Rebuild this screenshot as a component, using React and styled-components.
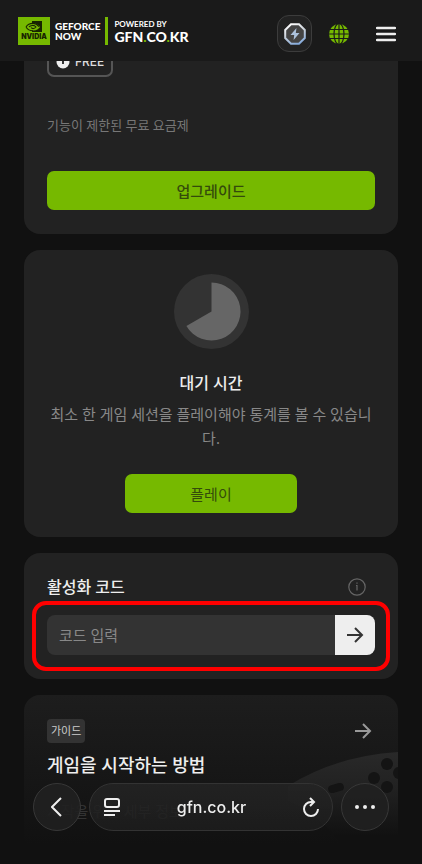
import React from "react";
import styled, { createGlobalStyle } from "styled-components";

const GlobalStyle = createGlobalStyle`
  *, *::before, *::after { box-sizing: border-box; }
  html { background: #111; }
  body {
    margin: 0;
    background: #111;
    color: #eee;
    font-family: "Noto Sans", "Noto Sans CJK KR", sans-serif;
    overflow: hidden;
  }
  button, input { font: inherit; }
  h2, p { margin: 0; }
`;

const Page = styled.div`
  height: 100vh;
  overflow: hidden;
`;

const Header = styled.header`
  position: fixed;
  inset: 0 0 auto;
  z-index: 2;
  display: flex;
  align-items: flex-start;
  justify-content: space-between;
  height: 61px;
  padding: 15px 16px 0 18px;
  background: #1a1a1a;
`;

const Brand = styled.a`
  display: flex;
  align-items: center;
  padding-top: 2px;
  color: #fff;
  text-decoration: none;
  font-family: Lato, sans-serif;
  font-weight: 900;
  white-space: nowrap;
`;

const LogoTile = styled.span`
  display: flex;
  flex-direction: column;
  align-items: center;
  justify-content: center;
  width: 32px;
  height: 28px;
  background: #76b900;
  color: #182400;
  font: 900 7px/8px Inter, sans-serif;
`;

const Product = styled.span`
  display: flex;
  flex-direction: column;
  justify-content: center;
  height: 28px;
  margin-left: 5px;
  padding-right: 5px;
  border-right: 3px solid #76b900;
  font-size: 10px;
  line-height: 10px;
`;

const Partner = styled.span`
  display: flex;
  flex-direction: column;
  margin-left: 6px;
  font-size: 14px;
  line-height: 15px;

  small {
    font-size: 8px;
    line-height: 10px;
    font-weight: 700;
  }
  i { color: #76b900; font-style: normal; }
`;

const HeaderActions = styled.div`
  display: flex;
  align-items: center;
  gap: 15px;
`;

const IconButton = styled.button`
  display: grid;
  place-items: center;
  width: ${(p) => p.$width || 24}px;
  height: ${(p) => p.$height || 24}px;
  padding: 0;
  border: ${(p) => (p.$framed ? "1px solid #3c3c3c" : "0")};
  border-radius: 12px;
  background: ${(p) => (p.$framed ? "#222" : "transparent")};
  color: ${(p) => p.$color || "#eee"};
`;

const Main = styled.main`
  display: flex;
  flex-direction: column;
  gap: 16px;
  padding: 23px 24px 0;
`;

const Card = styled.section`
  display: flex;
  flex-direction: column;
  align-items: ${(p) => (p.$centered ? "center" : "stretch")};
  padding: ${(p) => (p.$compact ? 22 : 24)}px 23px 24px;
  border-radius: 16px;
  background: #222;
`;

const PlanBadge = styled.span`
  display: flex;
  align-items: center;
  align-self: flex-start;
  gap: 5px;
  height: 30px;
  padding: 0 7px;
  border: 2px solid #555;
  border-radius: 7px;
  color: #ddd;
  font: 500 12px/16px Inter, sans-serif;
`;

const PlanNote = styled.p`
  margin: 39px 0 37px;
  color: #777;
  font-size: 13px;
  line-height: 18px;
`;

const GreenButton = styled.button`
  height: 39px;
  width: ${(p) => (p.$compact ? "172px" : "100%")};
  padding: 0;
  border: 0;
  border-radius: 7px;
  background: #76b900;
  color: #344b0b;
  font-size: 15px;
  line-height: 20px;
  font-weight: ${(p) => (p.$compact ? 400 : 500)};
`;

const CardTitle = styled.h2`
  color: #eee;
  font-size: ${(p) => (p.$large ? 18 : 16)}px;
  line-height: 24px;
  font-weight: 500;
`;

const Stats = styled.div`
  display: flex;
  flex-direction: column;
  align-items: center;
  margin: 22px 0 24px;
  text-align: center;

  p {
    margin-top: 7px;
    color: #888;
    font-size: 15px;
    line-height: 24px;
  }
`;

const CardHead = styled.div`
  display: flex;
  align-items: center;
  justify-content: space-between;
`;

const CodeForm = styled.form`
  position: relative;
  display: flex;
  height: 40px;
  margin-top: 16px;

  &::after {
    content: "";
    position: absolute;
    inset: -14px -15px -16px;
    border: 4px solid #f00;
    border-radius: 14px;
    pointer-events: none;
  }
`;

const CodeInput = styled.input`
  flex: 1;
  min-width: 0;
  padding: 0 12px;
  border: 0;
  border-radius: 8px 0 0 8px;
  background: #333;
  color: #eee;
  font-size: 15px;
  &::placeholder { color: #888; opacity: 1; }
`;

const SubmitButton = styled.button`
  display: grid;
  place-items: center;
  width: 40px;
  padding: 0;
  border: 0;
  border-radius: 0 8px 8px 0;
  background: #eee;
  color: #333;
`;

const GuideCard = styled(Card)`
  position: relative;
  min-height: 200px;
  overflow: hidden;
  background: linear-gradient(#1d1d1d, #191919 50px, #111 150px);
`;

const GuideArt = styled.svg`
  position: absolute;
  right: 0;
  top: 56px;
  width: 110px;
  height: 110px;
`;

const GuideTitle = styled(CardTitle)`
  position: relative;
  margin-top: 10px;
`;

const Tag = styled.span`
  padding: 0 4px;
  border-radius: 4px;
  background: #333;
  color: #ccc;
  font-size: 11px;
  line-height: 24px;
`;

const GuideText = styled.p`
  margin-top: 22px;
  color: #333;
  font-size: 15px;
  line-height: 24px;
`;

const BrowserBar = styled.nav`
  position: fixed;
  inset: auto 33px 33px;
  z-index: 2;
  display: flex;
  gap: 8px;
  height: 48px;
`;

const RoundButton = styled.button`
  display: grid;
  place-items: center;
  flex: 0 0 48px;
  padding: 0;
  border: 1px solid #383838;
  border-radius: 50%;
  background: #202020e6;
  color: #eee;
`;

const AddressBar = styled.div`
  flex: 1;
  min-width: 0;
  display: flex;
  align-items: center;
  justify-content: space-between;
  padding: 0 9px 0 10px;
  border: 1px solid #333;
  border-radius: 24px;
  background: linear-gradient(#242424d9, #1e1e1ed9);
  color: #eee;
  font: 500 16px/24px Inter, sans-serif;
`;

function NvidiaMark() {
  return (
    <svg width="18" height="12" viewBox="0 0 18 12" fill="none" aria-hidden="true">
      <path d="M7 0h10v11H7V9.400c4 .6 6.500-1.400 8-3.400C13 3.500 10.500 2 7 2z" fill="#182400" />
      <path d="M1 6c1.500-2.500 4-3.600 7-3.600 2.500 0 4.500 1.300 6 3.400M1 6c1.500 2.600 4 3.800 7 3.800M4 6c1.200-1.700 5-2.500 7 0-1.800 2-3.600 2-5 .6" stroke="#182400" strokeWidth="1.1" />
    </svg>
  );
}

function MembershipIcon() {
  return (
    <svg width="24" height="24" viewBox="0 0 24 24" fill="none" aria-hidden="true">
      <defs>
        <linearGradient id="octagon" x1="7" y1="2" x2="15" y2="23" gradientUnits="userSpaceOnUse">
          <stop stopColor="#fff" /><stop offset=".45" stopColor="#c9d0d9" /><stop offset="1" stopColor="#80a8dc" />
        </linearGradient>
      </defs>
      <path d="M8 2.200h8L21.800 8v8L16 21.800H8L2.200 16V8z" fill="#444" stroke="url(#octagon)" strokeWidth="2" />
      <path d="M13.500 6 7.500 13h3.700l-.6 5 5.900-7h-3.700z" fill="#abc1dc" />
    </svg>
  );
}

function GlobeIcon() {
  return (
    <svg width="22" height="22" viewBox="0 0 22 22" aria-hidden="true">
      <circle cx="11" cy="11" r="10" fill="#76b900" />
      <g fill="none" stroke="#1a1a1a" strokeWidth="1.2">
        <path d="M11 1v20M1 11h20M2 6.500h18M2 15.500h18" />
        <ellipse cx="11" cy="11" rx="5" ry="10.500" />
      </g>
    </svg>
  );
}

function ArrowIcon({ size = 20 }) {
  return (
    <svg width={size} height={size} viewBox="0 0 20 20" fill="none" stroke="currentColor" strokeWidth="2" aria-hidden="true">
      <path d="M2 10h15M10 3l7 7-7 7" />
    </svg>
  );
}

export default function App() {
  return (
    <Page>
      <GlobalStyle />
      <Header>
        <Brand href="#">
          <LogoTile><NvidiaMark />NVIDIA</LogoTile>
          <Product><span>GEFORCE</span><span>NOW</span></Product>
          <Partner><small>POWERED BY</small><span>GFN<i>.</i>CO<i>.</i>KR</span></Partner>
        </Brand>
        <HeaderActions>
          <IconButton $framed $width={35} $height={37} aria-label="멤버십"><MembershipIcon /></IconButton>
          <IconButton $color="#76b900" aria-label="언어"><GlobeIcon /></IconButton>
          <IconButton $width={40} aria-label="메뉴">
            <svg width="20" height="16" viewBox="0 0 20 16" stroke="currentColor" strokeWidth="2.400" strokeLinecap="round" aria-hidden="true"><path d="M1 2h18M1 8h18M1 14h18" /></svg>
          </IconButton>
        </HeaderActions>
      </Header>

      <Main>
        <Card>
          <PlanBadge>
            <svg width="14" height="14" viewBox="0 0 14 14" aria-hidden="true"><circle cx="7" cy="7" r="6.500" fill="#eee" /><path d="M7 4v5" stroke="#333" strokeWidth="2" /></svg>
            FREE
          </PlanBadge>
          <PlanNote>기능이 제한된 무료 요금제</PlanNote>
          <GreenButton>업그레이드</GreenButton>
        </Card>

        <Card $centered>
          <svg width="75" height="75" viewBox="0 0 75 75" aria-hidden="true">
            <circle cx="37.500" cy="37.500" r="37.500" fill="#333" />
            <path d="M37.500 37.500V8.500A29 29 0 1 1 12.400 52z" fill="#666" />
          </svg>
          <Stats>
            <CardTitle>대기 시간</CardTitle>
            <p>최소 한 게임 세션을 플레이해야 통계를 볼 수 있습니다.</p>
          </Stats>
          <GreenButton $compact>플레이</GreenButton>
        </Card>

        <Card $compact>
          <CardHead>
            <CardTitle as="label" htmlFor="code">활성화 코드</CardTitle>
            <IconButton $width={36} $height={20} $color="#666" aria-label="활성화 코드 정보">
              <svg width="18" height="18" viewBox="0 0 18 18" fill="none" stroke="currentColor" aria-hidden="true"><circle cx="9" cy="9" r="8.200" strokeWidth="1.200" /><path d="M8 7.500h1v5M9 4.500v1.300" strokeWidth="1.200" /></svg>
            </IconButton>
          </CardHead>
          <CodeForm onSubmit={(e) => e.preventDefault()}>
            <CodeInput id="code" placeholder="코드 입력" />
            <SubmitButton aria-label="코드 제출"><ArrowIcon /></SubmitButton>
          </CodeForm>
        </Card>

        <GuideCard>
          <GuideArt viewBox="0 0 110 110" aria-hidden="true">
            <defs><linearGradient id="controller" x1="0" y1="0" x2="0" y2="100" gradientUnits="userSpaceOnUse"><stop stopColor="#292929" /><stop offset=".35" stopColor="#222" /><stop offset=".85" stopColor="#111" /></linearGradient></defs>
            <path d="M0 35Q48 5 110 1v109H60Q45 70 0 50z" fill="url(#controller)" />
            <g fill="#141414"><circle cx="99" cy="13" r="6" /><circle cx="86" cy="27" r="6" /><circle cx="99" cy="36" r="6" /><circle cx="111" cy="22" r="6" /><rect x="40" y="33" width="16" height="8" rx="4" transform="rotate(-15 48 37)" /></g>
          </GuideArt>
          <CardHead>
            <Tag>가이드</Tag>
            <IconButton $color="#999" aria-label="가이드 열기"><ArrowIcon /></IconButton>
          </CardHead>
          <GuideTitle $large>게임을 시작하는 방법</GuideTitle>
          <GuideText>시작을 위한 세부 정보</GuideText>
        </GuideCard>
      </Main>

      <BrowserBar aria-label="브라우저">
        <RoundButton aria-label="뒤로">
          <svg width="12" height="20" viewBox="0 0 12 20" fill="none" stroke="currentColor" strokeWidth="2" aria-hidden="true"><path d="m10 1-9 9 9 9" /></svg>
        </RoundButton>
        <AddressBar>
          <IconButton aria-label="페이지 메뉴">
            <svg width="18" height="20" viewBox="0 0 18 20" fill="none" stroke="currentColor" strokeWidth="2" aria-hidden="true"><rect x="2" y="2" width="14" height="8" rx="2" /><path d="M1 14h16M1 18h11" /></svg>
          </IconButton>
          <span>gfn.co.kr</span>
          <IconButton aria-label="새로고침">
            <svg width="18" height="20" viewBox="0 0 18 20" fill="none" stroke="currentColor" strokeWidth="2" aria-hidden="true"><path d="M12 5H9a7 7 0 1 0 7 7M8 1l4 4-4 4" /></svg>
          </IconButton>
        </AddressBar>
        <RoundButton aria-label="더 보기">
          <svg width="20" height="4" viewBox="0 0 20 4" fill="currentColor" aria-hidden="true"><circle cx="2" cy="2" r="2" /><circle cx="10" cy="2" r="2" /><circle cx="18" cy="2" r="2" /></svg>
        </RoundButton>
      </BrowserBar>
    </Page>
  );
}
